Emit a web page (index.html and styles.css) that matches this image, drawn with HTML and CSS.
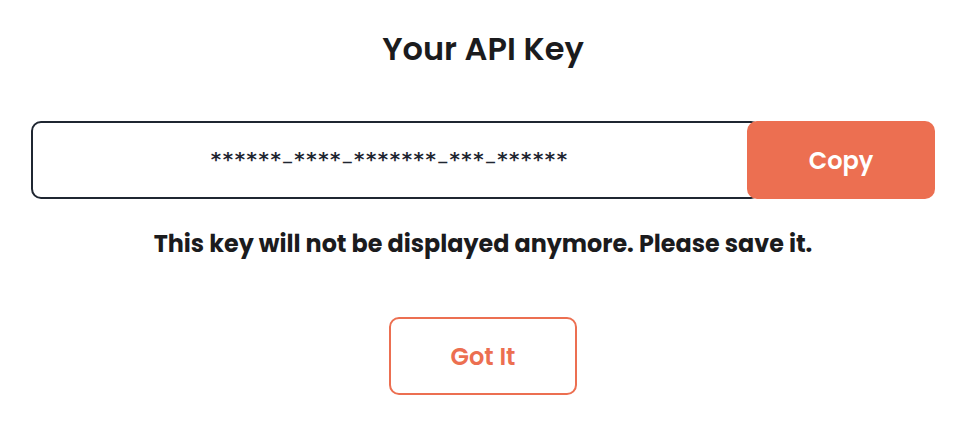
FILE: index.html
```html
<!DOCTYPE html>
<html lang="en">
<head>
<meta charset="utf-8">
<title>Your API Key</title>
<link rel="stylesheet" href="styles.css">
</head>
<body>
<main class="modal">
  <h1 class="title">Your API Key</h1>
  <div class="key-row">
    <div class="key-field"><span class="key-text">******<span class="sep">_</span>****<span class="sep">_</span>*******<span class="sep">_</span>***<span class="sep">_</span>******</span></div>
    <button class="btn btn-copy" type="button">Copy</button>
  </div>
  <p class="warning">This key will not be displayed anymore. Please save it.</p>
  <button class="btn btn-outline" type="button">Got It</button>
</main>
</body>
</html>
```
FILE: styles.css
```css
html, body {
  margin: 0;
  padding: 0;
  background: #ffffff;
}
body {
  font-family: "Poppins", "Open Sans", "DejaVu Sans", sans-serif;
  color: #1b1b1d;
}
.modal {
  width: 904px;
  margin: 0 auto;
  padding-top: 25px;
  display: flex;
  flex-direction: column;
  align-items: center;
}
.title {
  margin: 0;
  font-size: 32px;
  line-height: 48px;
  font-weight: 600;
  color: #1b1b1d;
}
.key-row {
  margin-top: 48px;
  width: 100%;
  display: flex;
  height: 78px;
}
.key-field {
  flex: 1;
  box-sizing: border-box;
  border: 2px solid #1f2631;
  border-radius: 10px;
  padding: 0 14px 6px 0;
  display: flex;
  align-items: center;
  justify-content: center;
  font-family: "DejaVu Sans Mono", "Liberation Mono", monospace;
  font-size: 19.8px;
  font-weight: 700;
  color: #1f2631;
}
.key-text {
  white-space: pre;
  line-height: 24px;
}
.sep {
  font-size: 15px;
  padding: 0 1.5px;
  vertical-align: 6px;
}
.btn {
  font-family: inherit;
  font-size: 24px;
  font-weight: 600;
  width: 188px;
  height: 78px;
  border-radius: 10px;
  cursor: pointer;
  box-sizing: border-box;
  padding: 0;
}
.btn-copy {
  margin-left: -14px;
  border: none;
  background: #ec6f51;
  color: #ffffff;
}
.warning {
  margin: 27px 0 0;
  font-size: 23.85px;
  line-height: 36px;
  font-weight: 700;
  color: #1b1b1d;
}
.btn-outline {
  margin-top: 55px;
  background: #ffffff;
  border: 2px solid #ec6f51;
  color: #ec6f51;
}
```
